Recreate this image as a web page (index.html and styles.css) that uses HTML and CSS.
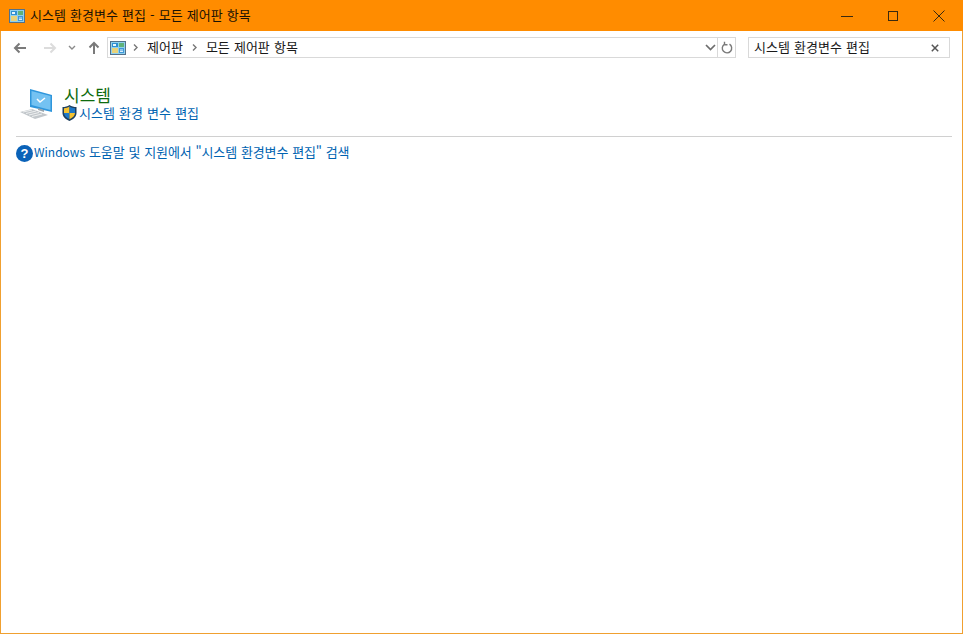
FILE: index.html
```html
<!DOCTYPE html>
<html lang="ko">
<head>
<meta charset="utf-8">
<title>시스템 환경변수 편집 - 모든 제어판 항목</title>
<link rel="stylesheet" href="styles.css">
</head>
<body>
<div class="window">
  <header class="titlebar">
    <svg class="cp-icon" width="16" height="14" viewBox="0 0 16 14"><rect x=".5" y=".5" width="15" height="13" fill="#8fd0ee" stroke="#52708a"/><rect x="2" y="2" width="6" height="4" fill="#2f8fd0"/><rect x="3" y="3" width="3" height="2" fill="#eaf6fc"/><rect x="9" y="2" width="5" height="4" fill="#5fb27a"/><rect x="2" y="7" width="6" height="5" fill="#e8d27a"/><rect x="9" y="7" width="5" height="5" fill="#3f97d8"/><path d="M10 9h3M10 10.500h3" stroke="#d8eefa"/></svg>
    <span class="title">시스템 환경변수 편집 - 모든 제어판 항목</span>
    <div class="controls">
      <span class="ctl"><svg width="12" height="12" viewBox="0 0 12 12"><path d="M0 6.500h12" stroke="#3a2a10" fill="none"/></svg></span>
      <span class="ctl"><svg width="12" height="12" viewBox="0 0 12 12"><rect x="1.500" y="1.500" width="9" height="9" stroke="#3a2a10" fill="none"/></svg></span>
      <span class="ctl"><svg width="12" height="12" viewBox="0 0 12 12"><path d="M.5.500l11 11M11.500.500l-11 11" stroke="#3a2a10" fill="none"/></svg></span>
    </div>
  </header>
  <nav class="toolbar">
    <svg class="nav back" width="14" height="12" viewBox="0 0 14 12"><path d="M13 6H2M6.500 1.500L2 6l4.500 4.500" stroke="#7a7a7a" stroke-width="2" fill="none"/></svg>
    <svg class="nav fwd" width="14" height="12" viewBox="0 0 14 12"><path d="M1 6h11M7.500 1.500L12 6l-4.500 4.500" stroke="#dcdcdc" stroke-width="2" fill="none"/></svg>
    <svg class="nav down" width="8" height="5" viewBox="0 0 8 5"><path d="M1 1l3 3 3-3" stroke="#8a8a8a" stroke-width="1.400" fill="none"/></svg>
    <svg class="nav up" width="12" height="13" viewBox="0 0 12 13"><path d="M6 13V2M1.500 6.500L6 2l4.500 4.500" stroke="#7a7a7a" stroke-width="2" fill="none"/></svg>
    <div class="address">
      <svg class="cp-icon" width="16" height="14" viewBox="0 0 16 14"><rect x=".5" y=".5" width="15" height="13" fill="#8fd0ee" stroke="#52708a"/><rect x="2" y="2" width="6" height="4" fill="#2f8fd0"/><rect x="3" y="3" width="3" height="2" fill="#eaf6fc"/><rect x="9" y="2" width="5" height="4" fill="#5fb27a"/><rect x="2" y="7" width="6" height="5" fill="#e8d27a"/><rect x="9" y="7" width="5" height="5" fill="#3f97d8"/><path d="M10 9h3M10 10.500h3" stroke="#d8eefa"/></svg>
      <svg class="crumb-sep first" width="5" height="7" viewBox="0 0 5 7"><path d="M1 .5l3 3-3 3" stroke="#777" stroke-width="1.400" fill="none"/></svg>
      <span class="crumb">제어판</span>
      <svg class="crumb-sep second" width="5" height="7" viewBox="0 0 5 7"><path d="M1 .5l3 3-3 3" stroke="#777" stroke-width="1.400" fill="none"/></svg>
      <span class="crumb">모든 제어판 항목</span>
      <svg class="addr-drop" width="11" height="7" viewBox="0 0 11 7"><path d="M1 1l4.500 4.500L10 1" stroke="#6d6d6d" stroke-width="1.700" fill="none"/></svg>
      <span class="refresh"><svg width="12" height="13" viewBox="0 0 12 13"><path d="M8.500 3.200A4.700 4.700 0 1 1 3.300 3.300M3.500 .8v3h3" stroke="#7a7a7a" stroke-width="1.400" fill="none"/></svg></span>
    </div>
    <div class="search">
      <span class="search-text">시스템 환경변수 편집</span>
      <svg width="8" height="8" viewBox="0 0 8 8"><path d="M.8.800l6.400 6.400M7.200.800L.8 7.200" stroke="#555" stroke-width="1.500" fill="none"/></svg>
    </div>
  </nav>
  <main class="content">
    <section class="result">
      <svg class="sys-icon" width="34" height="32" viewBox="0 0 34 32">
        <path d="M10 0l22 6v17L10 18z" fill="#2f96dc"/>
        <path d="M11.500 2l19 5v14l-19-5z" fill="#74c2f2"/>
        <path d="M17 10l3 3 5-4" stroke="#fff" stroke-width="1.500" fill="none"/>
        <path d="M18 19l6 2v2l-6-2z" fill="#9aa5ad"/>
        <path d="M0 23l12-3 16 6-13 4z" fill="#c2c7cb"/>
        <path d="M3 23l9-2M6 24.500l10-2.500M9 26l10-2.500M12 27.500l10-2.500" stroke="#eef0f1" fill="none"/>
      </svg>
      <div class="result-text">
        <a class="result-title">시스템</a>
        <div class="task">
          <svg class="shield" width="15" height="16" viewBox="0 0 15 16"><path d="M7.500 0C5.500 1.500 3 2 .5 2v6c0 3.500 3 6.500 7 8 4-1.500 7-4.500 7-8V2C12 2 9.500 1.500 7.500 0z" fill="#1f3f5f"/><path d="M7.500 1.500V8H2V3.200c2 0 3.800-.6 5.500-1.700z" fill="#f6c331"/><path d="M7.500 1.500c1.700 1.100 3.500 1.700 5.500 1.700V8H7.500z" fill="#1e78c8"/><path d="M2 8h5.500v6.200C4.500 13 2.200 10.800 2 8z" fill="#1e78c8"/><path d="M7.500 8H13c-.2 2.800-2.500 5-5.500 6.200z" fill="#f6c331"/></svg>
          <a class="link">시스템 환경 변수 편집</a>
        </div>
      </div>
    </section>
    <hr class="rule">
    <div class="help">
      <span class="help-icon">?</span>
      <a class="link help-link"><span class="latin">Windows</span> 도움말 및 지원에서 "시스템 환경변수 편집" 검색</a>
    </div>
  </main>
</div>
</body>
</html>
```
FILE: styles.css
```css
* { box-sizing: border-box; }
html, body { margin: 0; height: 100%; }
body {
  background: #fff;
  font-family: "Noto Sans CJK KR", "Noto Sans", sans-serif;
  font-size: 13px;
  word-spacing: .5px;
  color: #1a1a1a;
  overflow: hidden;
}
svg { display: block; flex: none; }
.window {
  width: 963px;
  height: 634px;
  border: 1px solid #f0a030;
  border-top: 0;
  display: flex;
  flex-direction: column;
}
.titlebar {
  height: 31px;
  margin: 0 -1px;
  background: #ff8c00;
  display: flex;
  align-items: center;
  padding-left: 9px;
  flex: none;
}
.title { margin-left: 5px; color: #1a1205; line-height: 16px; padding-bottom: 2px; }
.controls { margin-left: auto; margin-right: 1px; display: flex; }
.ctl { width: 46px; height: 30px; display: flex; align-items: center; justify-content: center; }
.toolbar {
  height: 33px;
  display: flex;
  align-items: center;
  flex: none;
  padding-right: 12px;
}
.back { margin-left: 12px; }
.fwd { margin-left: 16px; }
.down { margin-left: 11px; }
.up { margin-left: 12px; margin-right: 7px; }
.address {
  width: 629px;
  height: 21px;
  border: 1px solid #d9d9d9;
  display: flex;
  align-items: center;
  padding-left: 2px;
}
.crumb-sep.first { margin: 0 9px 0 7px; }
.crumb-sep.second { margin: 0 9px 0 9px; }
.crumb { line-height: 16px; padding-bottom: 2px; }
.addr-drop { margin-left: auto; margin-right: 1px; }
.refresh {
  width: 18px;
  height: 19px;
  border-left: 1px solid #d9d9d9;
  display: flex;
  align-items: center;
  justify-content: center;
}
.search {
  width: 202px;
  height: 21px;
  margin-left: 12px;
  border: 1px solid #d9d9d9;
  display: flex;
  align-items: center;
  justify-content: space-between;
  padding: 0 10px 0 5px;
}
.search-text { line-height: 16px; padding-bottom: 2px; }
.content { padding: 21px 10px 0 15px; }
.result { display: flex; padding-left: 4px; height: 51px; }
.sys-icon { margin: 4px 10px 0 0; }
.result-text { display: flex; flex-direction: column; }
.result-title { font-size: 17px; line-height: 20px; color: #0e6b0e; }
.task { display: flex; align-items: center; margin-left: -2px; }
.shield { margin-right: 2px; }
.link { color: #0063b1; line-height: 16px; }
.help-link { letter-spacing: -.15px; padding-bottom: 2px; }
.latin { font-size: 12px; letter-spacing: 0; }
.rule { margin: 0; border: 0; border-top: 1px solid #d0d0d0; }
.help { display: flex; align-items: center; margin-top: 7px; }
.help-icon {
  width: 17px;
  height: 17px;
  border-radius: 50%;
  background: #0a62b8;
  color: #fff;
  font: bold 13px/17px "Liberation Sans", sans-serif;
  text-align: center;
  margin-right: 1px;
}
```
